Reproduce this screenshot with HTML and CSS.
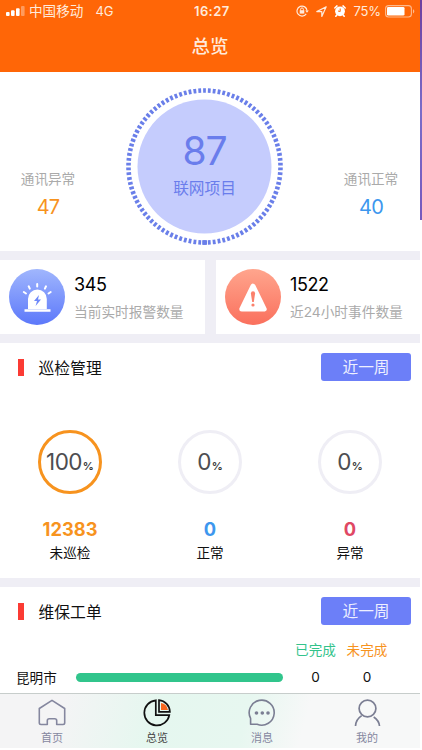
FILE: index.html
```html
<!DOCTYPE html>
<html lang="zh-CN">
<head>
<meta charset="utf-8">
<title>总览</title>
<link rel="stylesheet" href="styles.css">
</head>
<body>
<div class="screen">
  <header class="header">
    <div class="status">
      <div class="carrier">
        <svg width="19" height="10" viewBox="0 0 19 10" fill="#fff"><rect x="0" y="6" width="3.6" height="4" rx="1"/><rect x="5" y="4.3" width="3.6" height="5.7" rx="1"/><rect x="10" y="2.2" width="3.6" height="7.8" rx="1"/><rect x="15" y="0" width="3.6" height="10" rx="1" opacity=".35"/></svg>
        <span class="operator">中国移动</span><span class="network">4G</span>
      </div>
      <div class="clock">16:27</div>
      <div class="indicators">
        <svg class="lock" width="13" height="12" viewBox="0 0 13 12" fill="none" stroke="#ffeadb"><path d="M10.2 8.8A5 5 0 1 1 11 5.8" stroke-width="1.2"/><path d="M9.2 5.4h3.6L11 7.8z" fill="#ffeadb" stroke="none"/><rect x="3.7" y="5.2" width="4.6" height="3.4" fill="#ffeadb" stroke="none"/><path d="M4.6 5.5V4.3a1.4 1.4 0 0 1 2.8 0v1.2"/></svg>
        <svg class="arrow" width="11" height="11" viewBox="0 0 11 11" fill="none" stroke="#ffeadb" stroke-width="1.2" stroke-linejoin="round"><path d="M.8 5.6 10.2.8 5.8 10.4V5.6z"/></svg>
        <svg class="alarm" width="12" height="12" viewBox="0 0 12 12"><circle cx="6" cy="6.3" r="4.9" fill="#fff"/><path d="M.8 3 3 .9M11.2 3 9 .9M2.8 10l-1 1.3M9.2 10l1 1.3" stroke="#fff" stroke-width="1.5" stroke-linecap="round"/><path d="M6.2 3.5v3L4 6" fill="none" stroke="#ff6607" stroke-width="1"/></svg>
        <span class="charge">75%</span>
        <svg class="battery" width="30" height="13" viewBox="0 0 30 13"><rect x=".6" y=".6" width="25.8" height="11.4" rx="3" fill="none" stroke="#ffb98c" stroke-width="1.1"/><rect x="2" y="2" width="17.5" height="8.6" rx="1.3" fill="#fff"/><path d="M28 4.2c1.8.6 1.8 3.6 0 4.2z" fill="#ffb98c"/></svg>
      </div>
    </div>
    <h1 class="title">总览</h1>
  </header>

  <section class="hero">
    <div class="side"><span class="side-label">通讯异常</span><span class="side-value amber">47</span></div>
    <div class="dial">
      <svg class="ring" width="157" height="157" viewBox="0 0 157 157"><circle cx="78.5" cy="78.5" r="67" fill="#c5ccfd"/><circle cx="78.5" cy="78.5" r="76" fill="none" stroke="#6a7fe9" stroke-width="4.6" pathLength="980" stroke-dasharray="5.8 4.2" stroke-dashoffset="2.9" transform="rotate(90 78.5 78.5)"/><path d="M76.2 154.5h4.8" stroke="#6a7fe9" stroke-width="4.6"/></svg>
      <div class="dial-text"><span class="dial-value">87</span><span class="dial-label">联网项目</span></div>
    </div>
    <div class="side"><span class="side-label">通讯正常</span><span class="side-value blue">40</span></div>
  </section>

  <section class="cards">
    <div class="card">
      <svg width="56" height="56" viewBox="0 0 56 56"><defs><linearGradient id="b" x2="0" y2="1"><stop stop-color="#a0b6fd"/><stop offset="1" stop-color="#5c78fa"/></linearGradient></defs><circle cx="28" cy="28" r="28" fill="url(#b)"/><path d="M19 40V30a9.3 9.3 0 0 1 18.8 0v10zM15.5 40.2h26v2.6h-26z" fill="#fff"/><path d="M28.2 15v2.6M19.7 17.3l1.1 2.3M37 17.3l-1.1 2.3M14.8 23l2.2 1.5M41.7 23l-2.2 1.5" stroke="#fff" stroke-width="2" stroke-linecap="round"/><path d="M30 26l-5 6h3l-1.4 5 5.4-6.4h-3z" fill="#6f89fa"/></svg>
      <div class="card-text"><span class="card-value">345</span><span class="card-label">当前实时报警数量</span></div>
    </div>
    <div class="card">
      <svg width="56" height="56" viewBox="0 0 56 56"><defs><linearGradient id="r" x2="0" y2="1"><stop stop-color="#ffa58d"/><stop offset="1" stop-color="#fa705d"/></linearGradient></defs><circle cx="28" cy="28" r="28" fill="url(#r)"/><path d="M28 17.2 39.2 40H16.8z" fill="#fff" stroke="#fff" stroke-width="5" stroke-linejoin="round"/><path d="M25.9 24.4a2.1 2.1 0 0 1 4.2 0L28.8 33h-1.6z" fill="#fb806b"/><circle cx="28" cy="36" r="1.6" fill="#fb806b"/></svg>
      <div class="card-text"><span class="card-value">1522</span><span class="card-label">近24小时事件数量</span></div>
    </div>
  </section>

  <section class="panel inspection">
    <div class="panel-head"><h2>巡检管理</h2><button>近一周</button></div>
    <div class="gauges">
      <div class="gauge"><div class="circle full"><b>100</b><i>%</i></div><span class="count amber">12383</span><span class="name">未巡检</span></div>
      <div class="gauge"><div class="circle"><b>0</b><i>%</i></div><span class="count blue">0</span><span class="name">正常</span></div>
      <div class="gauge"><div class="circle"><b>0</b><i>%</i></div><span class="count red">0</span><span class="name">异常</span></div>
    </div>
  </section>

  <section class="panel orders">
    <div class="panel-head"><h2>维保工单</h2><button>近一周</button></div>
    <div class="order-grid">
      <span></span><span></span><span class="done">已完成</span><span class="todo">未完成</span>
      <span class="city">昆明市</span><span class="bar"></span><span class="num">0</span><span class="num">0</span>
    </div>
  </section>

  <nav class="tabs">
    <div class="tab"><svg width="28" height="28" viewBox="0 0 28 28" fill="none" stroke="#85879f" stroke-width="1.6" stroke-linejoin="round"><path d="M1.3 9.5 14 1.3l12.7 8.2v14.3q0 1.7-1.7 1.7h-6.3v-3.7q0-2-2-2h-5.4q-2 0-2 2v3.7H3q-1.7 0-1.7-1.7z"/></svg><span>首页</span></div>
    <div class="tab active"><svg width="28" height="28" viewBox="0 0 28 28" fill="none" stroke="#111" stroke-width="1.7"><path d="M12.8 1.3A12.6 12.6 0 1 0 26.3 16.1H12.8z"/><path d="M16 1.2V12.8H26.9A12 12 0 0 0 16 1.2z"/><path d="M18 4v7.1h7A8.7 8.7 0 0 0 18 4z" fill="#f7651c" stroke="none"/></svg><span>总览</span></div>
    <div class="tab"><svg width="28" height="28" viewBox="0 0 28 28" fill="none" stroke="#7b7e93" stroke-width="1.6"><path d="M2.6 25.3V19.4A12.5 12.5 0 1 1 9.2 25.3z" stroke-linejoin="round"/><g fill="#7b7e93" stroke="none"><circle cx="8.5" cy="14" r="1.8"/><circle cx="14.3" cy="14" r="1.8"/><circle cx="20" cy="14" r="1.8"/></g></svg><span>消息</span></div>
    <div class="tab"><svg width="28" height="28" viewBox="0 0 28 28" fill="none" stroke="#7b7e93" stroke-width="1.7"><circle cx="14.5" cy="9.5" r="8.4"/><path d="M2.5 27C2.7 22.5 5 19 8.7 16.6M20.7 18Q26 21.5 26.5 27"/></svg><span>我的</span></div>
  </nav>
</div>
<div class="edge"></div>
</body>
</html>
```

FILE: styles.css
```css
* { box-sizing: border-box; }
body {
  margin: 0;
  height: 750px;
  display: flex;
  overflow: hidden;
  background: #fff;
  font-family: Inter, "Noto Sans CJK SC", sans-serif;
  color: #111;
}
svg { display: block; flex: none; }
h1, h2 { margin: 0; font-weight: 400; }
.screen { width: 420px; height: 748px; display: flex; flex-direction: column; background: #efeef5; }
.edge { width: 2px; height: 220px; background: linear-gradient(#6d3fa0, #7a6cc8 50%, #7659bd); }
.amber { color: #f7931e; }
.blue { color: #3d97ee; }
.red { color: #e04864; }

.header { height: 72px; background: #ff6607; color: #ffeadb; flex: none; }
.status { height: 22px; display: grid; grid-template-columns: 1fr 40px 1fr; align-items: center; font-size: 13px; line-height: 22px; }
.carrier { display: flex; align-items: center; padding-left: 6px; }
.operator { margin-left: 4px; font-size: 13.6px; }
.network { margin-left: 12px; letter-spacing: -0.1px; }
.clock { padding-left: 4px; font-weight: 600; white-space: nowrap; letter-spacing: 0.4px; }
.indicators { display: flex; align-items: center; justify-content: flex-end; padding-right: 5px; }
.arrow { margin-left: 7px; }
.alarm { margin-left: 7px; }
.charge { margin-left: 7px; letter-spacing: -0.1px; }
.battery { margin-left: 4px; }
.title { height: 50px; line-height: 49px; font-size: 18.5px; font-weight: 500; text-align: center; }

.hero { height: 179px; background: #fff; display: grid; grid-template-columns: 96px 1fr 98px; flex: none; }
.side { padding-top: 95px; display: flex; flex-direction: column; align-items: center; }
.side-label { font-size: 13.6px; line-height: 24px; color: #aaa; }
.side-value { font-size: 20px; line-height: 33px; letter-spacing: -0.8px; }
.dial { display: grid; justify-items: center; align-content: start; padding: 16px 9px 0 0; }
.dial > * { grid-area: 1 / 1; }
.dial-text { display: flex; flex-direction: column; align-items: center; padding-top: 38px; color: #6a7dec; }
.dial-value { font-size: 39px; line-height: 50px; letter-spacing: -1.2px; }
.dial-label { font-size: 15.7px; line-height: 26px; }

.cards { margin: 9px 0; height: 74px; display: grid; grid-template-columns: 205px 204px; gap: 11px; flex: none; }
.card { background: #fff; display: flex; align-items: center; gap: 9px; padding-left: 9px; }
.card-text { display: flex; flex-direction: column; padding-top: 3px; }
.card-value { font-size: 18px; line-height: 26px; letter-spacing: -0.4px; color: #000; }
.card-label { font-size: 13.7px; line-height: 28px; color: #aaa; white-space: nowrap; }

.panel { background: #fff; }
.inspection { height: 235px; flex: none; }
.orders { margin-top: 9px; height: 106px; flex: none; }
.panel-head { height: 48px; display: flex; align-items: center; justify-content: space-between; padding: 0 9px 0 18px; }
.panel-head h2 { font-size: 15.8px; display: flex; align-items: center; gap: 15px; }
.panel-head h2::before { content: ""; width: 5.5px; height: 17px; background: #fb3b34; }
.panel-head button { width: 90px; height: 28px; border: 0; border-radius: 3px; padding: 1px 0 0; background: #6c7ff8; color: #eef0ff; font: 15.7px/27px Inter, "Noto Sans CJK SC", sans-serif; }
.gauges { display: grid; grid-template-columns: repeat(3, 1fr); padding-top: 39px; }
.gauge { display: flex; flex-direction: column; align-items: center; }
.circle { width: 64px; height: 64px; border: 3px solid #efeef5; border-radius: 50%; display: flex; justify-content: center; align-items: baseline; line-height: 58px; color: #4d4d50; }
.circle.full { border-color: #f7931e; }
.circle b { font-size: 22.5px; font-weight: 400; letter-spacing: -0.6px; }
.circle i { font-size: 11px; font-style: normal; font-weight: 600; margin-left: 1px; color: #333; }
.count { margin-top: 23px; font-size: 18.3px; line-height: 24px; font-weight: 700; }
.name { font-size: 13.6px; line-height: 24px; }

.order-grid { display: grid; grid-template-columns: 60px 207px 64px 40px; grid-template-rows: 28px 28px; align-items: center; padding-left: 16px; font-size: 13.6px; }
.done, .todo, .num { text-align: center; white-space: nowrap; }
.done { color: #33c38b; }
.todo { color: #f7931e; }
.done, .order-grid .num { margin-left: 1px; }
.todo, .order-grid .num:last-child { margin-left: -6px; margin-right: -6px; }
.bar { height: 9px; border-radius: 5px; background: #31c58c; }

.tabs { height: 55px; flex: none; display: grid; grid-template-columns: repeat(4, 1fr); border-top: 1px solid #c7cdcb; background: linear-gradient(105deg, #f4f4f5 15%, #e5f7ef 37%, #e7f7f0 58%, #f7f8f8 72%); }
.tab { display: flex; flex-direction: column; align-items: center; padding: 5px 1px 0 0; font-size: 11px; line-height: 20px; color: #85879f; }
.tab span { margin-top: 1px; }
.active { color: #444; }
```
